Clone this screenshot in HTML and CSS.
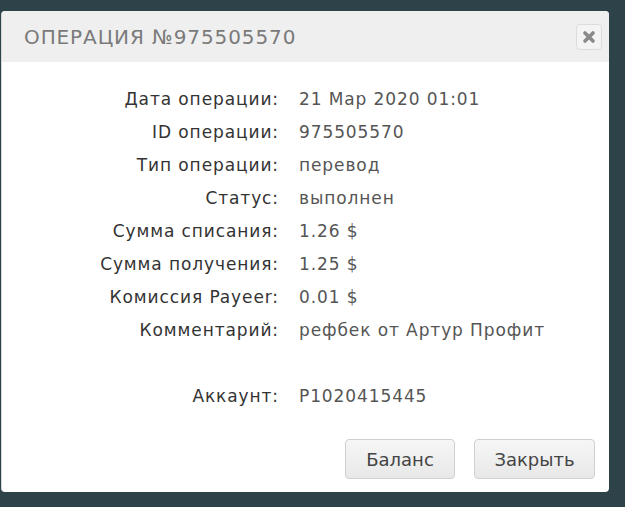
FILE: index.html
```html
<!DOCTYPE html>
<html lang="ru">
<head>
    <meta charset="UTF-8">
    <title>Операция №975505570</title>
    <link rel="stylesheet" href="styles.css">
</head>
<body>

    <!-- Operation dialog -->
    <div class="dialog">
        <div class="dialog-header">
            <h2 class="dialog-title">Операция №975505570</h2>
            <button class="close-btn" title="Закрыть">
                <svg width="14" height="14" viewBox="0 0 14 14">
                    <path d="M3 3 L11 11 M11 3 L3 11" stroke="#8a8a8a" stroke-width="3.6" stroke-linecap="round"/>
                </svg>
            </button>
        </div>

        <div class="dialog-body">
            <dl class="details">
                <dt>Дата операции:</dt><dd>21 Мар 2020 01:01</dd>
                <dt>ID операции:</dt><dd>975505570</dd>
                <dt>Тип операции:</dt><dd>перевод</dd>
                <dt>Статус:</dt><dd>выполнен</dd>
                <dt>Сумма списания:</dt><dd>1.26 $</dd>
                <dt>Сумма получения:</dt><dd>1.25 $</dd>
                <dt>Комиссия Payeer:</dt><dd>0.01 $</dd>
                <dt>Комментарий:</dt><dd>рефбек от Артур Профит</dd>
                <dt class="spacer"></dt><dd class="spacer"></dd>
                <dt>Аккаунт:</dt><dd>P1020415445</dd>
            </dl>
        </div>

        <div class="dialog-footer">
            <button class="btn">Баланс</button>
            <button class="btn btn-wide">Закрыть</button>
        </div>
    </div>

</body>
</html>
```

FILE: styles.css
```css
/* Colours */
:root {
    --page-bg: #2e424a;
    --header-bg: #efefef;
    --title-color: #7a7a7a;
    --label-color: #333333;
    --value-color: #555555;
    --font-main: 'DejaVu Sans', 'Liberation Sans', sans-serif;
}

* {
    margin: 0;
    padding: 0;
    box-sizing: border-box;
}

body {
    background-color: var(--page-bg);
    font-family: var(--font-main);
    height: 507px;
    overflow: hidden;
}

/* Dialog box */
.dialog {
    width: 608px;
    margin: 11px 0 0 1px;
    background: #fff;
    border-radius: 4px;
    border-left: 1px solid #d8d8d8;
    overflow: hidden;
}

.dialog-header {
    height: 51px;
    background-color: var(--header-bg);
    display: flex;
    align-items: center;
    justify-content: space-between;
    padding: 0 7px 0 22px;
}

.dialog-title {
    font-family: 'DejaVu Sans', sans-serif;
    font-weight: normal;
    font-size: 20px;
    letter-spacing: 0.9px;
    text-transform: uppercase;
    color: var(--title-color);
}

.close-btn {
    width: 26px;
    height: 26px;
    border: 1px solid #dcdcdc;
    border-radius: 4px;
    background: #f4f4f4;
    display: flex;
    align-items: center;
    justify-content: center;
    cursor: pointer;
}

/* Detail rows */
.dialog-body {
    padding: 21px 0 0 0;
}

.details {
    display: grid;
    grid-template-columns: 277px 1fr;
    column-gap: 20px;
    font-size: 17px;
    letter-spacing: 0.9px;
}

.details dt,
.details dd {
    height: 33px;
    line-height: 33px;
    white-space: nowrap;
}

.details dt {
    text-align: right;
    color: var(--label-color);
}

.details dd {
    color: var(--value-color);
}

/* Buttons */
.dialog-footer {
    display: flex;
    justify-content: flex-end;
    gap: 19px;
    padding: 26px 14px 13px 0;
}

.btn {
    width: 110px;
    height: 40px;
    font-family: 'DejaVu Sans', sans-serif;
    font-size: 18px;
    color: #444;
    background: linear-gradient(#f6f6f6, #e8e8e8);
    border: 1px solid #d0d0d0;
    border-radius: 4px;
    cursor: pointer;
}

.btn-wide {
    width: 121px;
}
```
